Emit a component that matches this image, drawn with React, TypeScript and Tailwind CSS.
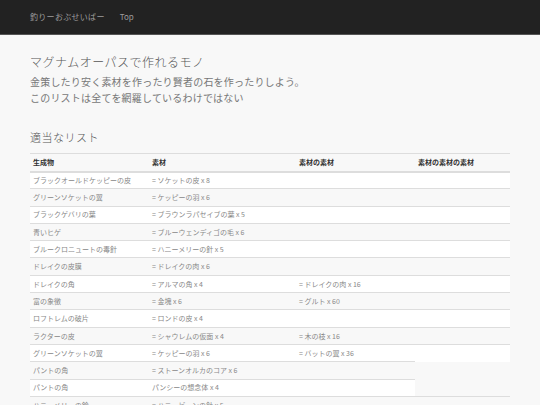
import React from "react";

const rows: { c: string[] }[] = [
  { c: ["ブラックオールドケッピーの皮", "= ソケットの皮 x 8", "", ""] },
  { c: ["グリーンソケットの翼", "= ケッピーの羽 x 6", "", ""] },
  { c: ["ブラックゲバリの葉", "= ブラウンラパセイブの葉 x 5", "", ""] },
  { c: ["青いヒゲ", "= ブルーウェンディゴの毛 x 6", "", ""] },
  { c: ["ブルークロニュートの毒針", "= ハニーメリーの針 x 5", "", ""] },
  { c: ["ドレイクの皮膜", "= ドレイクの肉 x 6", "", ""] },
  { c: ["ドレイクの角", "= アルマの角 x 4", "= ドレイクの肉 x 16", ""] },
  { c: ["富の象徴", "= 金塊 x 6", "= グルト x 60", ""] },
  { c: ["ロフトレムの破片", "= ロンドの皮 x 4", "", ""] },
  { c: ["ラクターの皮", "= シャウレムの仮面 x 4", "= 木の枝 x 16", ""] },
  { c: ["グリーンソケットの翼", "= ケッピーの羽 x 6", "= バットの翼 x 36", ""] },
  { c: ["パントの角", "= ストーンオルカのコア x 6", ""] },
  { c: ["パントの角", "パンシーの想念体 x 4", ""] },
  { c: ["ハニーメリーの鈴", "= ハニービーンの針 x 5", "", ""] },
];

const font = { fontFamily: '"Noto Sans CJK JP", "Noto Sans", sans-serif' };

export default function App() {
  return (
    <div className="min-h-[405px] w-[540px] bg-[#f8f8f8] overflow-hidden" style={font}>
      <nav className="h-[35px] bg-[#222222] border-b border-[#555] flex items-center px-[30px] text-[8px] text-[#9d9d9d]">
        <span className="tracking-[0.3px]">釣りーおぶせいばー</span>
        <span className="ml-[15px]">Top</span>
      </nav>
      <main className="px-[30px]">
        <h1 className="mt-[18px] text-[12px] leading-[18px] font-light tracking-[0.5px] text-[#555]">
          マグナムオーパスで作れるモノ
        </h1>
        <div className="mt-[3px] text-[10px] leading-[16px] text-[#777] tracking-[0.2px]">
          <p>金策したり安く素材を作ったり賢者の石を作ったりしよう。</p>
          <p>このリストは全てを網羅しているわけではない</p>
        </div>
        <h2 className="mt-[23px] text-[11px] leading-[16px] font-light tracking-[0.5px] text-[#555]">
          適当なリスト
        </h2>
        <table className="mt-[8px] w-[480px] table-fixed border-collapse text-[7px]">
          <colgroup>
            <col className="w-[119px]" />
            <col className="w-[147px]" />
            <col className="w-[119px]" />
            <col className="w-[95px]" />
          </colgroup>
          <thead>
            <tr className="h-[18px]">
              {["生成物", "素材", "素材の素材", "素材の素材の素材"].map((h) => (
                <th
                  key={h}
                  className="border-t border-[#ddd] border-b-2 border-b-[#ddd] px-[3px] text-left font-bold text-[#333]"
                >
                  {h}
                </th>
              ))}
            </tr>
          </thead>
          <tbody>
            {rows.map((r, i) => (
              <tr key={i} className="h-[17.3px]">
                {r.c.map((c, j) => (
                  <td
                    key={j}
                    className={`border-t border-[#ddd] px-[3px] text-[#888] whitespace-nowrap ${
                      i % 2 === 0 ? "bg-white" : "bg-transparent"
                    }`}
                  >
                    {c}
                  </td>
                ))}
              </tr>
            ))}
          </tbody>
        </table>
      </main>
    </div>
  );
}
